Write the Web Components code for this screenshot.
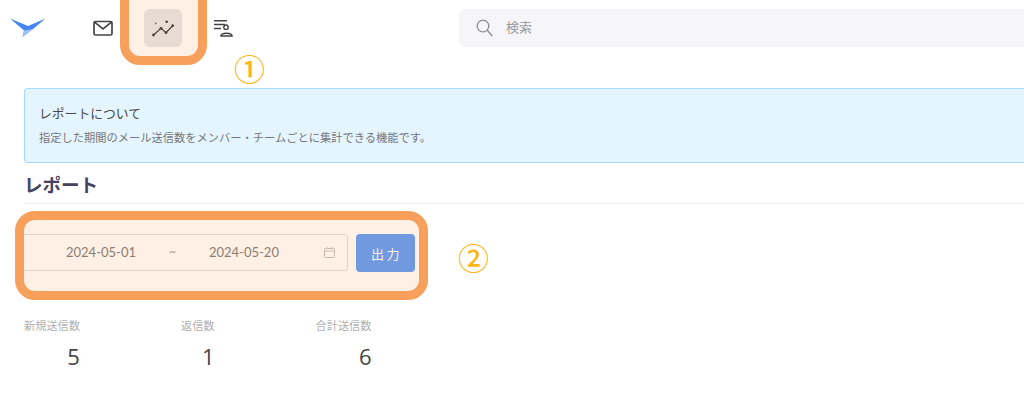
<!DOCTYPE html>
<html lang="ja">
<head>
<meta charset="utf-8">
<title>レポート</title>
<style>
  html, body { margin: 0; height: 410px; overflow: hidden; background: #fff; }
  body { position: relative; font-family: "Noto Sans CJK JP", "Noto Sans", sans-serif; color: #444; }
</style>
</head>
<body>
<app-header></app-header>
<report-page>
  <info-notice heading="レポートについて">指定した期間のメール送信数をメンバー・チームごとに集計できる機能です。</info-notice>
  <page-title>レポート</page-title>
  <date-form from="2024-05-01" to="2024-05-20"></date-form>
  <stat-row>
    <stat-item label="新規送信数" value="5"></stat-item>
    <stat-item label="返信数" value="1"></stat-item>
    <stat-item label="合計送信数" value="6"></stat-item>
  </stat-row>
</report-page>

<!-- 説明用の注釈 (画面の上に重なる) -->
<mark-box style="left:120px;top:-20px;width:87px;height:85px"></mark-box>
<mark-box style="left:15px;top:211px;width:413px;height:89px"></mark-box>
<mark-num style="left:234px;top:46px">①</mark-num>
<mark-num style="left:458px;top:235px">②</mark-num>

<script>
class AppHeader extends HTMLElement {
    constructor() {
        super();
        this.attachShadow({mode: "open"});
        this.shadowRoot.innerHTML = `
            <style>
                :host { display: flex; align-items: center; height: 56px; padding-left: 10px; box-sizing: border-box; }
                .logo { width: 37px; height: 20px; flex: none; }
                nav { display: flex; gap: 22px; margin-left: 37px; flex: none; }
                .btn { width: 38px; height: 38px; border-radius: 6px; display: flex; align-items: center; justify-content: center; }
                .btn.active { background: #e5e8ea; }
                svg { display: block; }
                .search {
                    margin-left: 217px; flex: none; width: 600px; height: 38px; border-radius: 7px;
                    background: #f6f6f8; display: flex; align-items: center; padding-left: 17px; box-sizing: border-box;
                    color: #9a9a9e; font-size: 13px; gap: 13px; line-height: 16px;
                }
                .search span { margin-top: -2px; }
            </style>
            <svg class="logo" viewBox="0 0 37 20">
                <path d="M0 .5 L18 8 L35.500 .5 L23 11 L12.500 19 L14 12.500 Z" fill="#4486f2"/>
                <path d="M14 12.500 L23 11 L12.500 19 Z" fill="#9cc2fa"/>
            </svg>
            <nav>
                <div class="btn">
                    <svg width="20" height="16" viewBox="0 0 20 16" fill="none" stroke="#444" stroke-width="1.700">
                        <rect x="1" y="1.500" width="18" height="13.500" rx="1.500"/>
                        <path d="M1.500 2.200 L10 9 L18.500 2.200"/>
                    </svg>
                </div>
                <div class="btn active">
                    <svg width="22" height="18" viewBox="0 0 22 18" fill="#333" stroke="none">
                        <path d="M1.500 16 L9 9.300 L14 13.700 L20.700 6.700" fill="none" stroke="#333" stroke-width="1.300"/>
                        <circle cx="1.500" cy="16" r="1.400"/>
                        <circle cx="9" cy="9.300" r="1.400"/>
                        <circle cx="14" cy="13.700" r="1.400"/>
                        <circle cx="20.700" cy="6.700" r="1.400"/>
                        <circle cx="14.700" cy="2.700" r="1.300"/>
                        <circle cx="3.700" cy="4.300" r=".9" fill="#666"/>
                    </svg>
                </div>
                <div class="btn">
                    <svg width="20" height="17" viewBox="0 0 20 17" fill="none" stroke="#444" stroke-width="1.400" style="margin-left:1px">
                        <path d="M0 .7 H13 M0 4.500 H11 M0 8.500 H7"/>
                        <circle cx="12" cy="7.200" r="2.200"/>
                        <path d="M7 16 C7 12.300 18 12.300 18 16 Z" stroke-width="1.600"/>
                    </svg>
                </div>
            </nav>
            <div class="search">
                <svg width="17" height="18" viewBox="0 0 17 18" fill="none" stroke="#8e8e8e" stroke-width="1.300">
                    <circle cx="7" cy="7" r="5.800"/>
                    <path d="M11.300 11.300 L16.300 17"/>
                </svg>
                <span>検索</span>
            </div>
        `;
    }
}
customElements.define('app-header', AppHeader);

class ReportPage extends HTMLElement {
    constructor() {
        super();
        this.attachShadow({mode: "open"});
        this.shadowRoot.innerHTML = `
            <style>
                :host { display: block; padding: 32px 0 0 24px; width: 1040px; box-sizing: border-box; }
            </style>
            <slot></slot>
        `;
    }
}
customElements.define('report-page', ReportPage);

class InfoNotice extends HTMLElement {
    constructor() {
        super();
        this.attachShadow({mode: "open"});
        this.shadowRoot.innerHTML = `
            <style>
                :host {
                    display: block; height: 75px; box-sizing: border-box; padding: 14px 14px 0;
                    background: #e4f5ff; border: 1px solid #a6dbfb; border-radius: 3px; color: #555;
                }
                .head { font-size: 12.800px; line-height: 19px; color: #4a4a4a; }
                .body { font-size: 11.250px; line-height: 16px; margin-top: 7px; color: #77777b; }
            </style>
            <div class="head"></div>
            <div class="body"><slot></slot></div>
        `;
        this.shadowRoot.querySelector('.head').textContent = this.getAttribute('heading');
    }
}
customElements.define('info-notice', InfoNotice);

class PageTitle extends HTMLElement {
    constructor() {
        super();
        this.attachShadow({mode: "open"});
        this.shadowRoot.innerHTML = `
            <style>
                :host {
                    display: block; height: 41px; box-sizing: border-box; padding: 8px 0 0;
                    border-bottom: 1px solid #f2f2f2; font-size: 18.500px; line-height: 27px; font-weight: 700; color: #46425f;
                }
            </style>
            <slot></slot>
        `;
    }
}
customElements.define('page-title', PageTitle);

class DateForm extends HTMLElement {
    constructor() {
        super();
        this.attachShadow({mode: "open"});
        this.shadowRoot.innerHTML = `
            <style>
                :host { display: flex; gap: 8px; margin: 30px 0 0 -4px; height: 38px; }
                .range {
                    width: 328px; height: 37px; box-sizing: border-box; border: 1px solid #dcdcdc; border-radius: 3px;
                    display: flex; align-items: center; font: 13px/16px "Lato", sans-serif; color: #777;
                    padding: 0 12px 1px 45px;
                }
                .range span { flex: none; }
                .til { margin: 0 33px; color: #999; font-size: 12px; }
                svg { margin-left: auto; }
                button {
                    width: 59px; height: 38px; border: 0; border-radius: 4px; background: #5898fa; color: #fff;
                    font: 13px "Noto Sans CJK JP", sans-serif; letter-spacing: 2.500px; padding: 0 0 0 2px; cursor: pointer;
                }
            </style>
            <div class="range">
                <span class="from"></span>
                <span class="til">~</span>
                <span class="to"></span>
                <svg width="11" height="11" viewBox="0 0 11 11" fill="none" stroke="#bdbdbd">
                    <rect x=".5" y="1.500" width="10" height="9" rx="1"/>
                    <path d="M.5 4 H10.500 M3 0 V2 M8 0 V2"/>
                </svg>
            </div>
            <button>出力</button>
        `;
        this.shadowRoot.querySelector('.from').textContent = this.getAttribute('from');
        this.shadowRoot.querySelector('.to').textContent = this.getAttribute('to');
    }
}
customElements.define('date-form', DateForm);

class StatRow extends HTMLElement {
    constructor() {
        super();
        this.attachShadow({mode: "open"});
        this.shadowRoot.innerHTML = `
            <style>
                :host { display: flex; gap: 101px; margin-top: 45px; }
            </style>
            <slot></slot>
        `;
    }
}
customElements.define('stat-row', StatRow);

class StatItem extends HTMLElement {
    constructor() {
        super();
        this.attachShadow({mode: "open"});
        this.shadowRoot.innerHTML = `
            <style>
                :host { display: block; text-align: right; }
                .label { font-size: 11.200px; line-height: 16px; color: #b0b0b0; white-space: nowrap; }
                .value { font: 22px/27px "Open Sans", sans-serif; color: #444; margin-top: 10px; }
            </style>
            <div class="label"></div>
            <div class="value"></div>
        `;
        this.shadowRoot.querySelector('.label').textContent = this.getAttribute('label');
        this.shadowRoot.querySelector('.value').textContent = this.getAttribute('value');
    }
}
customElements.define('stat-item', StatItem);

class MarkBox extends HTMLElement {
    constructor() {
        super();
        this.attachShadow({mode: "open"});
        this.shadowRoot.innerHTML = `
            <style>
                :host {
                    position: absolute; box-sizing: border-box; border: 9px solid #f7a05c; border-radius: 20px;
                    background: rgba(247, 160, 90, .16);
                }
            </style>
        `;
    }
}
customElements.define('mark-box', MarkBox);

class MarkNum extends HTMLElement {
    constructor() {
        super();
        this.attachShadow({mode: "open"});
        this.shadowRoot.innerHTML = `
            <style>
                :host {
                    position: absolute; font: 500 31px/44px "Noto Sans CJK JP", sans-serif; color: #fdb515;
                }
            </style>
            <slot></slot>
        `;
    }
}
customElements.define('mark-num', MarkNum);
</script>
</body>
</html>
